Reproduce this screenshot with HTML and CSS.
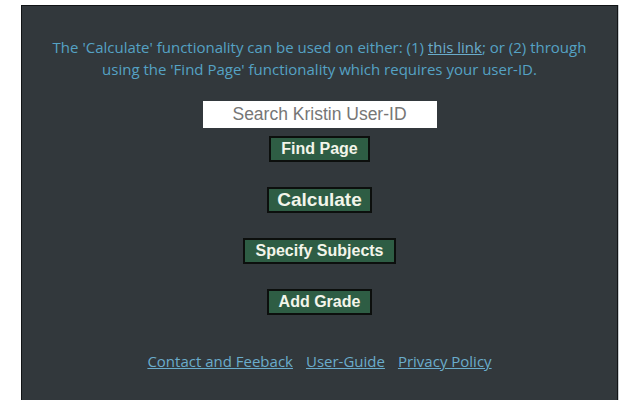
FILE: index.html
```html
<!DOCTYPE html>
<html>
<head>
<meta charset="utf-8">
<link rel="stylesheet" href="styles.css">
</head>
<body>
<div class="panel">
  <p class="intro">The 'Calculate' functionality can be used on either: (1) <a href="#" class="link">this link</a>; or (2) through using the 'Find Page' functionality which requires your user-ID.</p>
  <div class="controls">
    <input class="search" type="text" placeholder="Search Kristin User-ID">
    <button class="btn btn-find">Find Page</button>
    <button class="btn btn-calc">Calculate</button>
    <button class="btn">Specify Subjects</button>
    <button class="btn">Add Grade</button>
  </div>
  <div class="footer">
    <a href="#" class="link">Contact and Feeback</a>
    <a href="#" class="link">User-Guide</a>
    <a href="#" class="link">Privacy Policy</a>
  </div>
</div>
</body>
</html>
```
FILE: styles.css
```css
html, body {
  margin: 0;
  padding: 0;
  background: #ffffff;
}
body {
  overflow: hidden;
  height: 400px;
}
.panel {
  margin: 5px 0 0 21px;
  width: 597px;
  height: 420px;
  box-sizing: border-box;
  background: #32383c;
  border: 1px solid #111416;
  box-shadow: 1px 0 0 #c8cccf;
  padding-top: 30px;
  font-family: "Open Sans", "Noto Sans", sans-serif;
  color: #55a2c4;
}
.intro {
  margin: 0 auto;
  width: 548px;
  text-align: center;
  font-size: 15px;
  line-height: 22px;
}
.link {
  color: #6aaccb;
  text-decoration: underline;
}
.controls {
  display: flex;
  flex-direction: column;
  align-items: center;
  margin-top: 21px;
}
.search {
  width: 234px;
  height: 27px;
  box-sizing: border-box;
  border: none;
  background: #ffffff;
  font-family: "Liberation Sans", Arial, sans-serif;
  font-size: 17.5px;
  text-align: center;
  padding: 0;
  margin-bottom: 8px;
}
.search::placeholder {
  color: #767676;
}
.btn {
  font-family: "Liberation Sans", Arial, sans-serif;
  font-weight: bold;
  font-size: 16px;
  color: #f3f5ea;
  background: #2e5d44;
  border: 2px solid #0c0f0d;
  padding: 1px 10px;
  height: 26px;
  line-height: 20px;
  margin-bottom: 25px;
}
.btn-calc {
  font-size: 19px;
  padding: 1px 8px;
}
.footer {
  display: flex;
  justify-content: center;
  gap: 13px;
  margin-top: 11px;
  font-size: 15px;
}
```
